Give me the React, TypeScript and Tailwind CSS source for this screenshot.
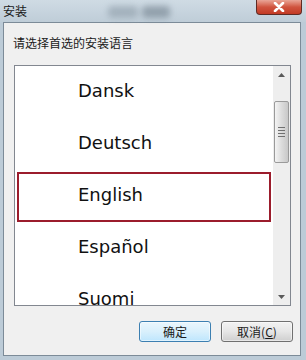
import React from 'react';

const languages = ['Dansk', 'Deutsch', 'English', 'Español'];

function ScrollBar() {
  return (
    <div className="flex h-full w-[17px] flex-col items-center bg-[#eeeeee]">
      {/* up arrow */}
      <div className="flex h-[17px] w-full items-center justify-center">
        <svg width="7" height="4" viewBox="0 0 7 4">
          <path d="M0 4 L3.5 0 L7 4 Z" fill="#5a5a5a" />
        </svg>
      </div>
      {/* thumb */}
      <div className="mt-[18px] flex h-[62px] w-[15px] items-center justify-center rounded-[2px] border border-[#9a9a9a] bg-gradient-to-r from-[#f4f4f4] via-[#dcdcdc] to-[#c8c8c8]">
        <div className="flex flex-col gap-[2px]">
          <div className="h-px w-[7px] bg-[#707070]" />
          <div className="h-px w-[7px] bg-[#707070]" />
          <div className="h-px w-[7px] bg-[#707070]" />
          <div className="h-px w-[7px] bg-[#707070]" />
        </div>
      </div>
      <div className="flex-1" />
      {/* down arrow */}
      <div className="flex h-[17px] w-full items-center justify-center">
        <svg width="7" height="4" viewBox="0 0 7 4">
          <path d="M0 0 L7 0 L3.5 4 Z" fill="#5a5a5a" />
        </svg>
      </div>
    </div>
  );
}

export default function App() {
  const cjk = { fontFamily: '"Noto Sans CJK SC", "Noto Sans", sans-serif' };

  return (
    <div className="flex h-[360px] w-[306px] flex-col overflow-hidden bg-[#bccbd7]" style={cjk}>
      {/* Title bar */}
      <div className="relative flex h-[22px] items-center bg-gradient-to-b from-[#cfdbe4] to-[#bfcdd8] pl-[3px]">
        <div className="absolute left-[108px] top-[6px] h-[12px] w-[30px] rounded-sm bg-[#8d9ca8] opacity-60 blur-[3px]" />
        <div className="absolute left-[142px] top-[6px] h-[12px] w-[28px] rounded-sm bg-[#7d8c98] opacity-70 blur-[3px]" />
        <span className="relative text-[12px] leading-none text-[#1a1a1a]">安装</span>
        {/* close button */}
        <div className="absolute right-[4px] top-0 flex h-[15px] w-[46px] items-center justify-center rounded-b-[4px] border border-t-0 border-[#5f2b24] bg-gradient-to-b from-[#e9a597] via-[#d0543f] to-[#c23a24]">
          <svg width="12" height="10" viewBox="0 0 12 10">
            <path d="M2 1 L10 9 M10 1 L2 9" stroke="#ffffff" strokeWidth="2.6" strokeLinecap="round" />
          </svg>
        </div>
      </div>

      {/* Window body */}
      <div className="flex h-[334px]">
        <div className="w-[3px]" />
        <div className="flex flex-1 flex-col border border-[#7c8b98] bg-[#f0f0f0]">
          <div className="pl-[9px] pt-[12px] text-[12px] leading-[16px] text-[#1a1a1a]">请选择首选的安装语言</div>

          {/* Language list */}
          <div className="ml-[10px] mt-[14px] flex h-[241px] w-[277px] border border-[#828790] bg-white">
            <div className="flex-1 overflow-hidden" style={{ fontFamily: '"DejaVu Sans", Verdana, sans-serif' }}>
              {languages.map((lang) => (
                <div key={lang} className="h-[52px] px-[2px] pt-[2px]">
                  <div
                    className={`flex h-[50px] items-center border-2 pb-[5px] pl-[59px] text-[18px] leading-[13px] text-[#111111] ${
                      lang === 'English' ? 'border-[#9b1c2c]' : 'border-transparent'
                    }`}
                  >
                    {lang}
                  </div>
                </div>
              ))}
              {/* partially scrolled-in last row */}
              <div className="h-[31px] pl-[63px] pt-[18px] text-[18px] leading-[13px] text-[#111111]">Suomi</div>
            </div>
            <ScrollBar />
          </div>

          {/* Buttons */}
          <div className="mt-[15px] flex justify-end gap-[10px] pr-[7px]">
            <button className="flex h-[21px] w-[72px] items-center justify-center rounded-[3px] border border-[#3c7fb1] bg-gradient-to-b from-[#eaf6fd] via-[#d9f0fc] to-[#bee6fd] text-[12px] text-[#1a1a1a] shadow-[inset_0_0_0_1px_#ffffff80]">
              确定
            </button>
            <button className="flex h-[21px] w-[72px] items-center justify-center rounded-[3px] border border-[#707070] bg-gradient-to-b from-[#f2f2f2] via-[#e6e6e6] to-[#cfcfcf] text-[12px] text-[#1a1a1a] shadow-[inset_0_0_0_1px_#ffffff80]">
              取消(<span className="underline">C</span>)
            </button>
          </div>
        </div>
        <div className="w-[5px]" />
      </div>
    </div>
  );
}
